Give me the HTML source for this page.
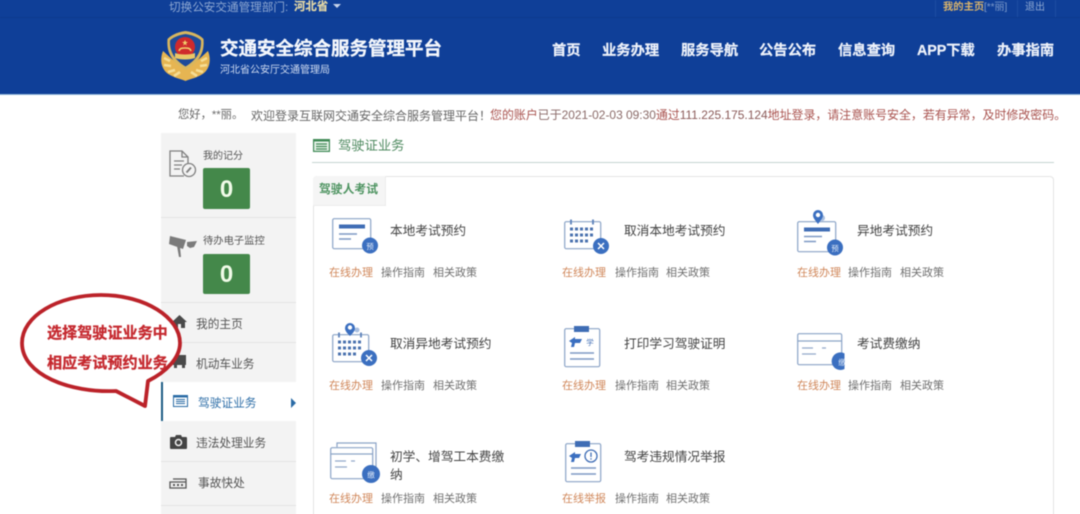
<!DOCTYPE html>
<html lang="zh-CN">
<head>
<meta charset="utf-8">
<title>交通安全综合服务管理平台</title>
<style>
html{margin:0;padding:0;background:#fff;width:1080px;height:514px;overflow:hidden}
body{margin:0;padding:0;background:#fff;width:1080px;height:514px;position:relative;overflow:hidden;font-family:"Liberation Sans","Noto Sans CJK SC",sans-serif}
#c{position:absolute;left:0;top:0;width:1080px;height:514px;overflow:hidden;contain:paint}
#o{position:absolute;left:-6px;top:-6px;width:1092px;height:526px;overflow:hidden;filter:blur(.45px)}
#b1{position:absolute;left:0;top:0;width:1092px;height:100px;background:#0f3f98}
#w{position:absolute;left:6px;top:6px;width:1080px;height:514px}
.a{position:absolute;white-space:nowrap;line-height:1}
svg{position:absolute;overflow:visible}
.nav{top:44px;font-size:14.3px;font-weight:bold;color:#eef2fa;-webkit-text-stroke:.2px #eef2fa}
.m{font-size:11.7px;color:#555}
.sep{position:absolute;left:161px;width:135px;height:1px;background:#e3e3e3}
.box{position:absolute;left:203px;width:47px;height:41px;background:#44884a;border-radius:2px;color:#f0fbe8;font-weight:bold;font-size:24px;line-height:43px;text-align:center}
.t{font-size:12.7px;color:#444}
.on{font-size:11px;color:#d0875a}
.g{font-size:11px;color:#707070}
</style>
</head>
<body>
<div id="c">
<div id="o">
<div id="b1"></div>
<div id="w">
<!-- header -->
<div class="a" style="left:0;top:17px;width:1080px;height:1px;background:#0d3a8e"></div>
<div class="a" style="left:-6px;top:94px;width:1092px;height:1px;background:#8fb6d8"></div>
<div class="a" style="left:169px;top:2px;font-size:11.600px;color:#8ea8d2">切换公安交通管理部门:</div>
<div class="a" style="left:294px;top:2px;font-size:11.400px;font-weight:bold;color:#e6d9a6;-webkit-text-stroke:.2px #e6d9a6">河北省</div>
<svg style="left:333px;top:4px" width="8" height="5"><path d="M0 0h8L4 4z" fill="#c8d4ea"/></svg>
<div class="a" style="left:935px;top:0;width:1px;height:17px;background:#1c4ca3"></div>
<div class="a" style="left:1017px;top:0;width:1px;height:17px;background:#1c4ca3"></div>
<div class="a" style="left:1055px;top:0;width:1px;height:17px;background:#1c4ca3"></div>
<div class="a" style="left:943px;top:3px;font-size:10.300px;font-weight:bold;color:#d8b36c">我的主页</div>
<div class="a" style="left:984px;top:3px;font-size:10px;color:#7f9ccb">[**丽]</div>
<div class="a" style="left:1025px;top:3px;font-size:10px;color:#8ea8d2">退出</div>

<!-- emblem -->
<svg style="left:161px;top:31px" width="49" height="51" viewBox="0 0 49 51">
<path d="M2 20C-2 30 1 40 9 44 14 47 20 48 24.500 50 29 48 35 47 40 44 48 40 51 30 47 20 42 24 38 30 24.500 36 11 30 7 24 2 20Z" fill="#e6b552"/>
<path d="M3 27l6 3M3 34l7 1M7 41l7-2M13 45l6-4M46 27l-6 3M46 34l-7 1M42 41l-7-2M36 45l-6-4" stroke="#f6dd94" stroke-width="2.600"/>
<path d="M24.500 0C16 1 9 5 6.500 8 5.500 20 9 30 24.500 39 40 30 43.500 20 42.500 8 40 5 33 1 24.500 0Z" fill="#d8b65e"/>
<path d="M24.500 3C17 4 11 7 9 9.500 8.500 19 12 28 24.500 35.500 37 28 40.500 19 40 9.500 38 7 32 4 24.500 3Z" fill="#1d4a9a"/>
<circle cx="24" cy="16" r="10" fill="#cf2a2c"/>
<path d="M14 22c5 2 15 2 20 0v5c-5 2-15 2-20 0z" fill="#e9c767"/>
<path d="M24 9l1 2h2l-2 1.500 1 2-2-1.200-2 1.200 1-2-2-1.500h2z" fill="#f2d36f"/>
<path d="M18 20c1-3 3-3 6-3s5 0 6 3" fill="none" stroke="#f2d36f" stroke-width="1.500"/>
</svg>
<div class="a" style="left:220px;top:39.500px;font-size:18.500px;font-weight:bold;color:#f4f7fc;-webkit-text-stroke:.3px #f4f7fc">交通安全综合服务管理平台</div>
<div class="a" style="left:220px;top:66px;font-size:10px;color:#cfdbf0">河北省公安厅交通管理局</div>

<div class="a nav" style="left:552px">首页</div>
<div class="a nav" style="left:602px">业务办理</div>
<div class="a nav" style="left:681px">服务导航</div>
<div class="a nav" style="left:759px">公告公布</div>
<div class="a nav" style="left:838px">信息查询</div>
<div class="a nav" style="left:917px;letter-spacing:-.05px">APP下载</div>
<div class="a nav" style="left:997px">办事指南</div>

<!-- welcome -->
<div class="a" style="left:178px;top:110px;font-size:11.300px;color:#666">您好，**丽。</div>
<div class="a" style="left:251px;top:110px;font-size:12px;color:#666">欢迎登录互联网交通安全综合服务管理平台！</div>
<div class="a" style="left:490px;top:110px;font-size:11.950px;color:#a9534f">您的账户<span style="color:#8a6a68">已于2021-02-03 09:30</span>通过<span style="color:#8a5a58">111.225.175.124</span>地址登录，请注意账号安全，若有异常，及时修改密码。</div>

<!-- sidebar -->
<div class="a" style="left:161px;top:133px;width:135px;height:387px;background:#f3f3f3"></div>
<div class="sep" style="top:217px"></div>
<div class="sep" style="top:302px"></div>
<div class="sep" style="top:342px"></div>
<div class="sep" style="top:461px"></div>
<div class="sep" style="top:505px"></div>
<div class="a" style="left:161px;top:382px;width:135px;height:39px;background:#fff"></div>
<div class="a" style="left:161px;top:382px;width:2px;height:39px;background:#1c5d85"></div>
<svg style="left:291px;top:398px" width="6" height="10"><path d="M0 0l5 5-5 5z" fill="#2a6ba5"/></svg>

<svg style="left:169px;top:150px" width="28" height="29" fill="none" stroke="#808080" stroke-width="1.300">
<path d="M15 26H1V1h12l6 6v7M13 1v6h6M5 11h10M5 15h8M5 19h6"/>
<circle cx="20" cy="20" r="6.500" fill="#f3f3f3"/>
<path d="M17.500 22.500l4.500-5" stroke-width="2"/>
</svg>
<div class="a" style="left:203px;top:152px;font-size:10px;color:#555">我的记分</div>
<div class="box" style="top:168px">0</div>
<svg style="left:169px;top:235px" width="28" height="22" fill="#7b7b7b">
<path d="M1 1l16 4-3 9L0 9zM8 11l3 1 1 10-2 0zM18 7l10-1-3 6-4 1-3-2z"/>
</svg>
<div class="a" style="left:203px;top:237px;font-size:10.300px;color:#555">待办电子监控</div>
<div class="box" style="top:254px;height:40px;line-height:42px">0</div>

<svg style="left:172px;top:315px" width="15" height="13" fill="#4a4a4a"><path d="M7.500 0L15 7h-2v6H9V9H6v4H2V7H0z"/></svg>
<div class="a m" style="left:196px;top:319px">我的主页</div>
<svg style="left:172px;top:355px" width="15" height="14" fill="#4a4a4a"><path d="M1 0h13v10H1zM2 10h3v3H2zM10 10h3v3h-3z"/></svg>
<div class="a m" style="left:196px;top:359px">机动车业务</div>
<svg style="left:173px;top:395px" width="15" height="12" fill="none" stroke="#2a6ba5"><rect x=".5" y=".5" width="14" height="11" fill="#fff"/><path d="M0 1.500h15" stroke-width="2"/><path d="M3 4.500h9M3 6.500h9M3 8.500h9"/></svg>
<div class="a" style="left:198px;top:398px;font-size:11.700px;color:#2f6fa8">驾驶证业务</div>
<svg style="left:170px;top:434px" width="17" height="15"><path d="M1 3h4l1-2h5l1 2h4a1 1 0 0 1 1 1v10a1 1 0 0 1-1 1H1a1 1 0 0 1-1-1V4a1 1 0 0 1 1-1z" fill="#444"/><circle cx="8.500" cy="8.500" r="3" fill="none" stroke="#f3f3f3" stroke-width="1.500"/></svg>
<div class="a m" style="left:196px;top:438px">违法处理业务</div>
<svg style="left:169px;top:478px" width="18" height="12" fill="none" stroke="#555" stroke-width="1.300"><path d="M4 1h13v9H1V4h16"/><path d="M4 7h2M8 7h2M12 7h2" stroke-width="2"/></svg>
<div class="a m" style="left:198px;top:478px">事故快处</div>

<!-- callout -->
<svg style="left:0;top:0" width="300" height="430">
<path d="M101 295C146 295 180 318 180 343 180 358 166 372 148 381L145 406 116 391C70 393 22 375 22 343 22 316 58 295 101 295Z" fill="#fff" stroke="#bb2229" stroke-width="3.800" stroke-linejoin="round"/>
</svg>
<div class="a" style="left:47px;top:326px;font-size:15.100px;font-weight:bold;color:#c5292f;-webkit-text-stroke:.3px #c5292f">选择驾驶证业务中</div>
<div class="a" style="left:47px;top:356px;font-size:15.100px;font-weight:bold;color:#c5292f;-webkit-text-stroke:.3px #c5292f">相应考试预约业务</div>

<!-- section title -->
<svg style="left:313px;top:139px" width="17" height="13" fill="none" stroke="#3f8a55" stroke-width="1.200"><rect x=".6" y=".6" width="15.800" height="11.800" fill="#eaf4ec"/><path d="M0 1.500h17" stroke-width="2"/><path d="M3 5h11M3 7.500h11M3 10h11"/></svg>
<div class="a" style="left:338px;top:139px;font-size:13.300px;color:#4f8a60">驾驶证业务</div>
<div class="a" style="left:312px;top:162px;width:742px;height:1px;background:#c6d5d2"></div>

<!-- card -->
<div class="a" style="left:313px;top:176px;width:741px;height:350px;box-sizing:border-box;border:1px solid #e4e4e4;border-radius:4px"></div>
<div class="a" style="left:313px;top:176px;width:72px;height:29px;background:#f5f5f5;border:1px solid #ececec;border-width:0 1px 1px 0;border-radius:4px 0 0 0"></div>
<div class="a" style="left:319px;top:184px;font-size:11.800px;font-weight:bold;color:#4d9360">驾驶人考试</div>

<!-- row 1 -->
<svg style="left:332px;top:218px" width="46" height="36">
<rect x=".7" y=".7" width="38" height="30" rx="1.500" fill="#fff" stroke="#8aa3c6" stroke-width="1.200"/>
<path d="M7 8.500h26" stroke="#3f6db5" stroke-width="4"/><path d="M7 16h18M7 21h12" stroke="#7d99c4" stroke-width="1.600"/>
<circle cx="38" cy="27.500" r="8" fill="#3b6fc0"/><text x="38" y="31" font-size="7.500" fill="#dfe9f7" text-anchor="middle">预</text>
</svg>
<div class="a t" style="left:390px;top:225px">本地考试预约</div>
<svg style="left:564px;top:219px" width="46" height="36">
<rect x=".7" y="2.700" width="36" height="27" rx="1.500" fill="#fff" stroke="#8aa3c6" stroke-width="1.200"/>
<path d="M7 .5v5M29 .5v5" stroke="#5d82bb" stroke-width="1.800"/>
<path d="M6 10h3M11 10h3M16 10h3M21 10h3M26 10h3M6 16h3M11 16h3M16 16h3M21 16h3M26 16h3M6 22h3M11 22h3M16 22h3M21 22h3" stroke="#4b72ae" stroke-width="3"/>
<circle cx="37" cy="27" r="8" fill="#3b6fc0"/><path d="M34 24l6 6M40 24l-6 6" stroke="#fff" stroke-width="1.500"/>
</svg>
<div class="a t" style="left:624px;top:225px">取消本地考试预约</div>
<svg style="left:797px;top:209px" width="50" height="46">
<rect x=".7" y="12.700" width="38" height="30" rx="1.500" fill="#fff" stroke="#8aa3c6" stroke-width="1.200"/>
<path d="M7 20.500h26" stroke="#3f6db5" stroke-width="4"/><path d="M7 27.500h18M7 32.500h12" stroke="#7d99c4" stroke-width="1.600"/>
<circle cx="25" cy="9" r="3" fill="#a9bfe0"/>
<path d="M21 15c-3-4-5-6-5-9a5 5 0 0 1 10 0c0 3-2 5-5 9z" fill="#3b6fc0"/><circle cx="21" cy="6" r="2.200" fill="#fff"/>
<circle cx="38" cy="38.500" r="8" fill="#3b6fc0"/><text x="38" y="42" font-size="7.500" fill="#dfe9f7" text-anchor="middle">预</text>
</svg>
<div class="a t" style="left:857px;top:225px">异地考试预约</div>

<!-- row 2 -->
<svg style="left:332px;top:322px" width="46" height="46">
<rect x=".7" y="12.700" width="36" height="27" rx="1.500" fill="#fff" stroke="#8aa3c6" stroke-width="1.200"/>
<path d="M7 10.500v5M29 10.500v5" stroke="#5d82bb" stroke-width="1.800"/>
<path d="M6 20h3M11 20h3M16 20h3M21 20h3M26 20h3M6 26h3M11 26h3M16 26h3M21 26h3M26 26h3M6 32h3M11 32h3M16 32h3M21 32h3" stroke="#4b72ae" stroke-width="3"/>
<circle cx="25" cy="8" r="2.500" fill="#a9bfe0"/>
<path d="M18 14c-3-3-5-5-5-8a5 5 0 0 1 10 0c0 3-2 5-5 8z" fill="#3b6fc0"/><circle cx="18" cy="5.500" r="2.200" fill="#fff"/>
<circle cx="37" cy="36" r="8" fill="#3b6fc0"/><path d="M34 33l6 6M40 33l-6 6" stroke="#fff" stroke-width="1.500"/>
</svg>
<div class="a t" style="left:390px;top:338px">取消异地考试预约</div>
<svg style="left:564px;top:326px" width="38" height="42">
<rect x=".7" y="2.700" width="35" height="38" rx="1.500" fill="#fff" stroke="#8aa3c6" stroke-width="1.200"/>
<rect x="10" y="0" width="15" height="6" fill="#3f6db5"/>
<path d="M5 15l6-4v2h7l-2 4h-5l-1 4-3 0 1-4z" fill="#3b6fc0"/>
<text x="26" y="19" font-size="7.500" fill="#3f6db5" text-anchor="middle">学</text>
<path d="M6 27h24M6 33h24" stroke="#7d99c4" stroke-width="1.600"/>
</svg>
<div class="a t" style="left:624px;top:338px">打印学习驾驶证明</div>
<svg style="left:797px;top:333px" width="50" height="36">
<rect x=".7" y=".7" width="44" height="31" rx="1.500" fill="#fff" stroke="#8aa3c6" stroke-width="1.200"/>
<path d="M1 8h44" stroke="#8aa3c6" stroke-width="1.200"/><path d="M5 15h11M25 15h4M5 21h14" stroke="#93a9ca" stroke-width="1.300"/>
<path d="M47.500 20.400A8.800 8.800 0 1 0 47.500 36z" fill="#3b6fc0"/><text x="45" y="32" font-size="7.500" fill="#dfe9f7" text-anchor="middle">缴</text>
</svg>
<div class="a t" style="left:857px;top:338px">考试费缴纳</div>

<!-- row 3 -->
<svg style="left:330px;top:442px" width="50" height="40">
<path d="M7 5V1h39v26h-3" fill="#fff" stroke="#8aa3c6" stroke-width="1.200"/>
<rect x=".7" y="5.700" width="42" height="31" rx="1.500" fill="#fff" stroke="#8aa3c6" stroke-width="1.200"/>
<path d="M1 12h42" stroke="#8aa3c6" stroke-width="1.200"/><path d="M5 19h11M21 19h4M5 25h12" stroke="#93a9ca" stroke-width="1.300"/>
<circle cx="41" cy="32" r="9" fill="#3b6fc0"/><text x="41" y="35.500" font-size="7.500" fill="#dfe9f7" text-anchor="middle">缴</text>
</svg>
<div class="a t" style="left:390px;top:451px">初学、增驾工本费缴</div>
<div class="a t" style="left:390px;top:469px">纳</div>
<svg style="left:565px;top:441px" width="38" height="42">
<rect x=".7" y="2.700" width="35" height="38" rx="1.500" fill="#fff" stroke="#8aa3c6" stroke-width="1.200"/>
<rect x="10" y="0" width="15" height="6" fill="#3f6db5"/>
<path d="M4 15l6-4v2h6l-2 4h-4l-1 4-3 0 1-4z" fill="#3b6fc0"/>
<circle cx="26" cy="15" r="6" fill="none" stroke="#3f6db5" stroke-width="1.300"/><path d="M26 11.500v4.500M26 17.300v1.300" stroke="#3f6db5" stroke-width="1.300"/>
<path d="M6 27h25M6 33h25" stroke="#7d99c4" stroke-width="1.600"/>
</svg>
<div class="a t" style="left:624px;top:451px">驾考违规情况举报</div>

<!-- links row 1 -->
<div class="a on" style="left:329px;top:268px">在线办理</div><div class="a g" style="left:381px;top:268px">操作指南</div><div class="a g" style="left:433px;top:268px">相关政策</div>
<div class="a on" style="left:562px;top:268px">在线办理</div><div class="a g" style="left:615px;top:268px">操作指南</div><div class="a g" style="left:666px;top:268px">相关政策</div>
<div class="a on" style="left:797px;top:268px">在线办理</div><div class="a g" style="left:848px;top:268px">操作指南</div><div class="a g" style="left:900px;top:268px">相关政策</div>
<!-- links row 2 -->
<div class="a on" style="left:329px;top:381px">在线办理</div><div class="a g" style="left:381px;top:381px">操作指南</div><div class="a g" style="left:433px;top:381px">相关政策</div>
<div class="a on" style="left:562px;top:381px">在线办理</div><div class="a g" style="left:615px;top:381px">操作指南</div><div class="a g" style="left:666px;top:381px">相关政策</div>
<div class="a on" style="left:797px;top:381px">在线办理</div><div class="a g" style="left:848px;top:381px">操作指南</div><div class="a g" style="left:900px;top:381px">相关政策</div>
<!-- links row 3 -->
<div class="a on" style="left:329px;top:494px">在线办理</div><div class="a g" style="left:381px;top:494px">操作指南</div><div class="a g" style="left:433px;top:494px">相关政策</div>
<div class="a on" style="left:562px;top:494px">在线举报</div><div class="a g" style="left:615px;top:494px">操作指南</div><div class="a g" style="left:666px;top:494px">相关政策</div>
</div>
</div>
</div>
</body>
</html>
